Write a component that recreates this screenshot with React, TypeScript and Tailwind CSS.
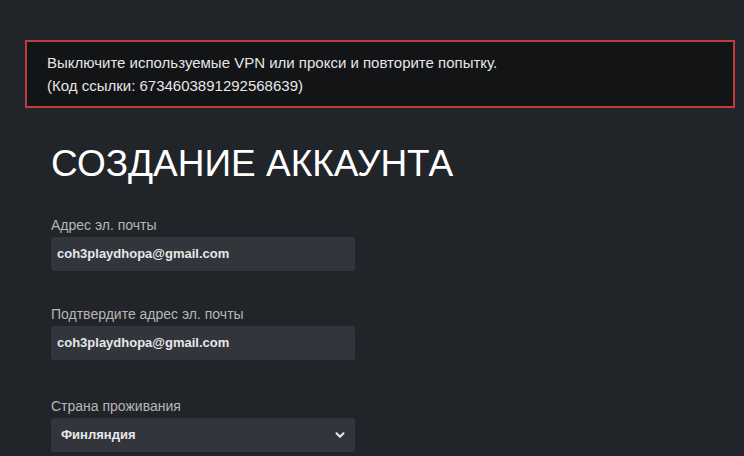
import { ChevronDown } from "lucide-react";

const labelCls = "text-[14px] leading-[18px] text-[#b8b6b4]";
const fieldCls =
  "mt-[3px] flex h-[34px] w-[304px] items-center rounded-[3px] bg-[#32353c] px-[6px] text-[13px] font-semibold text-[#e8e8e8]";

export default function App() {
  return (
    <div className="min-h-[456px] w-[744px] bg-[#212429] pt-[40px] font-['Liberation_Sans',Arial,sans-serif]">
      <div className="mx-[25px] h-[68px] w-[710px] border-2 border-[#c03c3c] bg-[#131416] pl-[20px] pt-[9px] text-[15px] leading-[23px] text-[#e6e6e6]">
        <div>Выключите используемые VPN или прокси и повторите попытку.</div>
        <div>(Код ссылки: 6734603891292568639)</div>
      </div>

      <div className="pl-[51px]">
        <h1 className="mt-[34px] text-[37px] leading-[44px] text-white">
          СОЗДАНИЕ АККАУНТА
        </h1>

        <div className="mt-[30px]">
          <div className={labelCls}>Адрес эл. почты</div>
          <div className={fieldCls}>coh3playdhopa@gmail.com</div>
        </div>

        <div className="mt-[34px]">
          <div className={labelCls}>Подтвердите адрес эл. почты</div>
          <div className={fieldCls}>coh3playdhopa@gmail.com</div>
        </div>

        <div className="mt-[37px]">
          <div className={labelCls}>Страна проживания</div>
          <div className={fieldCls + " justify-between"}>
            <span className="pl-[4px]">Финляндия</span>
            <ChevronDown size={14} strokeWidth={3.5} className="mr-[2px]" />
          </div>
        </div>
      </div>
    </div>
  );
}
